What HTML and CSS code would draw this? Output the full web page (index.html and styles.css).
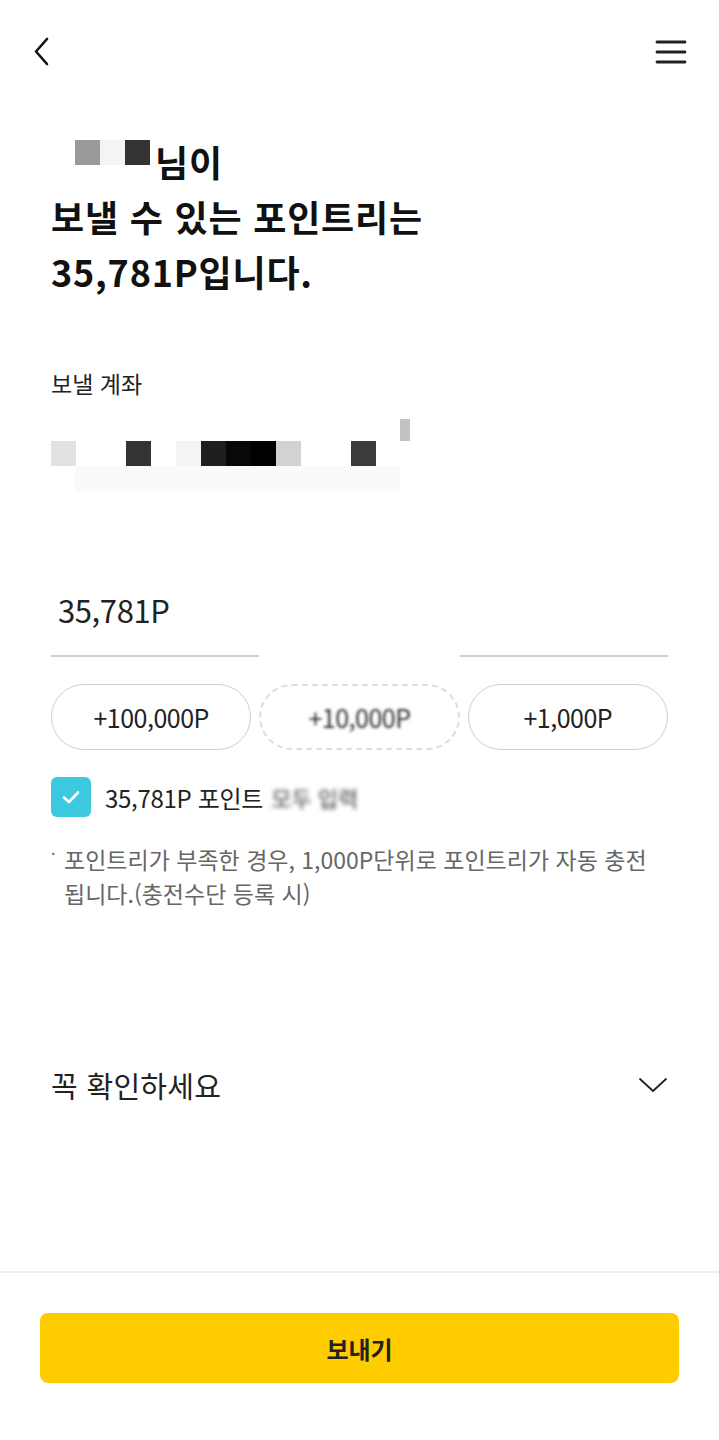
FILE: index.html
```html
<!DOCTYPE html>
<html lang="ko">
<head>
<meta charset="utf-8">
<link rel="stylesheet" href="styles.css">
</head>
<body>
<div class="page">
  <header class="topbar">
    <svg class="ic-back" width="20" height="30" viewBox="0 0 20 30"><path d="M15 2 L4 14.5 L15 27" fill="none" stroke="#111" stroke-width="2.6" stroke-linecap="round" stroke-linejoin="round"/></svg>
    <svg class="ic-menu" width="32" height="26" viewBox="0 0 32 26"><path d="M2 3H30M2 13H30M2 23H30" stroke="#222" stroke-width="2.8" stroke-linecap="round"/></svg>
  </header>

  <main class="content">
    <h1 class="title">
      <span class="line name-line"><span class="mosaic name-mosaic"><i class="c99"></i><i class="cf5"></i><i class="c33"></i></span>님이</span>
      <span class="line">보낼 수 있는 포인트리는</span>
      <span class="line">35,781P입니다.</span>
    </h1>

    <div class="label">보낼 계좌</div>
    <div class="account">
      <div class="acc-row acc-top"><i class="cc0 acc-tick"></i></div>
      <div class="acc-row">
        <i class="ce0"></i><i class="cff"></i><i class="cff"></i><i class="c33"></i><i class="cff"></i><i class="cf5"></i><i class="c1e"></i><i class="c08"></i><i class="c00"></i><i class="cd0"></i><i class="cff"></i><i class="cff"></i><i class="c3a"></i>
      </div>
      <div class="acc-row acc-bottom"><span class="acc-fade"></span></div>
    </div>

    <div class="amount">35,781P</div>
    <div class="underline"><span class="ul"></span><span class="ul-gap"></span><span class="ul"></span></div>

    <div class="chips">
      <button class="chip">+100,000P</button>
      <button class="chip chip-blur">+10,000P</button>
      <button class="chip">+1,000P</button>
    </div>

    <label class="check">
      <span class="box"><svg width="24" height="24" viewBox="0 0 24 24"><path d="M5 12.5 L10 17 L19 7.5" fill="none" stroke="#fff" stroke-width="2.6" stroke-linecap="round" stroke-linejoin="round"/></svg></span>
      <span class="check-text">35,781P 포인트</span>
      <span class="blurred">모두 입력</span>
    </label>

    <p class="note"><span class="dot">·</span><span class="note-text">포인트리가 부족한 경우, 1,000P단위로 포인트리가 자동 충전 됩니다.(충전수단 등록 시)</span></p>

    <div class="accordion">
      <span>꼭 확인하세요</span>
      <svg width="30" height="20" viewBox="0 0 30 20"><path d="M2 4 L15 16 L28 4" fill="none" stroke="#222" stroke-width="1.8" stroke-linecap="round" stroke-linejoin="round"/></svg>
    </div>
  </main>

  <footer class="footer">
    <button class="send">보내기</button>
  </footer>
</div>
</body>
</html>
```

FILE: styles.css
```css
* { box-sizing: border-box; }
html, body { margin: 0; padding: 0; background: #fff; }
body {
  font-family: "Noto Sans CJK KR", "Noto Sans", sans-serif;
  color: #111;
  width: 719px;
}
.page { display: flex; flex-direction: column; height: 1440px; }

.topbar {
  height: 100px;
  display: flex;
  justify-content: space-between;
  align-items: center;
  padding: 0 32px 0 32px;
}
.ic-back { margin-top: 4px; }
.ic-menu { margin-top: 4px; }

.content { padding: 0 51px; flex: 1; }

.title {
  margin: 34px 0 0;
  font-size: 36px;
  font-weight: 700;
  line-height: 55px;
  letter-spacing: 0.8px;
}
.title .line { display: block; }
.name-line { display: flex !important; align-items: center; }
.mosaic { display: inline-flex; }
.mosaic i, .acc-row i { display: block; width: 25px; height: 25px; }
.name-mosaic { margin: -18px 5px 0 24px; }

.c99 { background: #9a9a9a; }
.cf5 { background: #f4f4f4; }
.c33 { background: #333; }
.ce0 { background: #e2e2e2; }
.cff { background: #fff; }
.c1e { background: #1f1f1f; }
.c08 { background: #080808; }
.c00 { background: #000; }
.cd0 { background: #d2d2d2; }
.c3a { background: #3b3b3b; }
.cc0 { background: #c2c2c2; }

.label {
  margin-top: 69px;
  font-size: 23px;
  line-height: 30px;
  color: #222;
}

.account { margin-top: 21px; height: 74px; display: flex; flex-direction: column; }
.acc-row { display: flex; height: 22px; }
.acc-row i { height: 25px; }
.acc-top { padding-left: 349px; height: 22px; }
.acc-top .acc-tick { width: 10px; height: 22px; }
.acc-row:nth-child(2) { height: 25px; }
.acc-bottom { padding-left: 24px; height: 25px; }
.acc-fade { display: block; width: 325px; height: 25px; background: #fafafa; }

.amount {
  margin-top: 97px;
  padding-left: 7px;
  font-size: 31px;
  line-height: 40px;
  color: #222;
  letter-spacing: -0.4px;
}
.underline { margin-top: 25px; display: flex; height: 2px; }
.ul { flex: 208px 0 0; width: 208px; background: #cfcfcf; height: 2px; }
.ul-gap { flex: 1; }

.chips {
  margin-top: 27px;
  display: grid;
  grid-template-columns: repeat(3, 1fr);
  gap: 8px;
}
.chip {
  height: 66px;
  border: 1.5px solid #cfcfcf;
  border-radius: 33px;
  background: #fff;
  font-family: inherit;
  font-size: 25px;
  color: #222;
  letter-spacing: -0.5px;
}
.chip-blur {
  border: 2px dashed #ddd;
  color: transparent;
  text-shadow: 0 0 3px #333;
}

.check {
  margin-top: 27px;
  display: flex;
  align-items: center;
}
.box {
  width: 40px; height: 40px;
  border-radius: 6px;
  background: #3cc8de;
  display: flex; align-items: center; justify-content: center;
}
.check-text { margin-left: 14px; font-size: 24px; color: #222; letter-spacing: -0.3px; }
.blurred {
  margin-left: 8px;
  font-size: 22px;
  color: transparent;
  text-shadow: 0 0 4px #444;
}

.note {
  margin: 25px 0 0;
  display: flex;
  font-size: 23px;
  line-height: 34px;
  color: #666;
  letter-spacing: 0;
  word-break: keep-all;
}
.note .dot { width: 13px; flex: none; font-size: 16px; margin-top: -6px; }

.accordion {
  margin-top: 155px;
  display: flex;
  justify-content: space-between;
  align-items: center;
  font-size: 29px;
  line-height: 40px;
  color: #222;
  letter-spacing: 0.3px;
}

.footer {
  border-top: 2px solid #eee;
  padding: 40px 40px 57px;
}
.send {
  width: 100%;
  height: 70px;
  border: none;
  border-radius: 8px;
  background: #ffcc00;
  font-family: inherit;
  font-size: 24px;
  font-weight: 700;
  color: #222;
}
```
